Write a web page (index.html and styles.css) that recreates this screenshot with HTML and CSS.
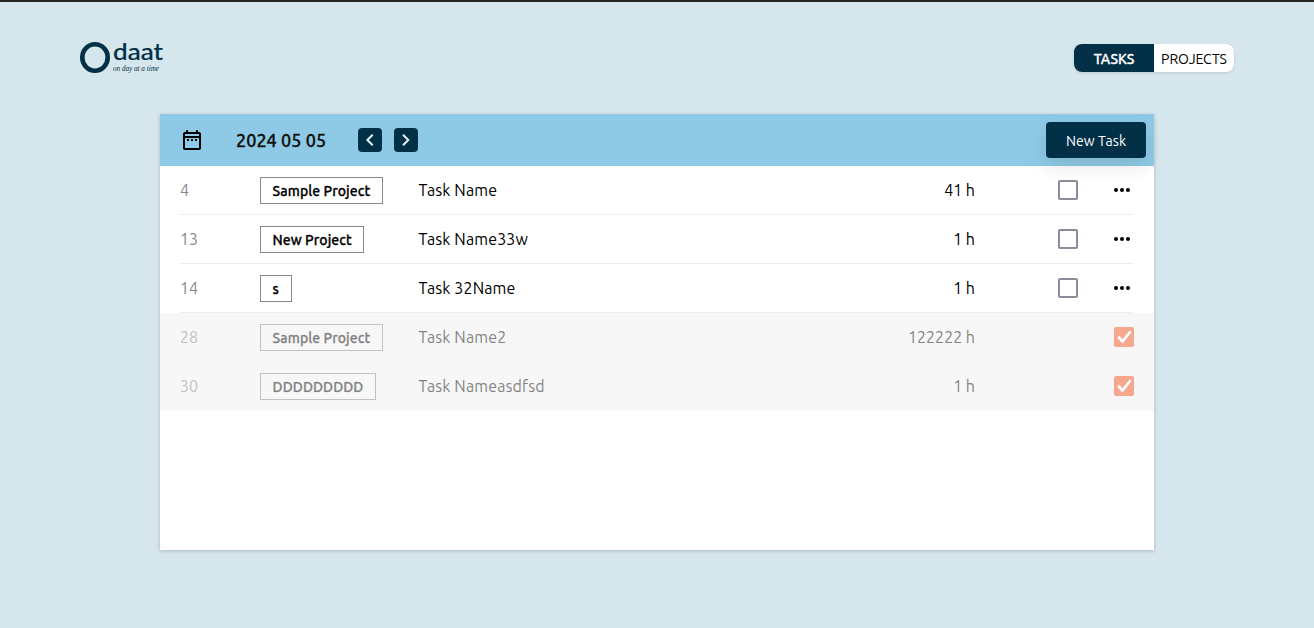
FILE: index.html
```html
<!DOCTYPE html>
<html lang="en">
<head>
<meta charset="utf-8">
<title>Odaat</title>
<link rel="stylesheet" href="styles.css">
</head>
<body>
<header class="header">
  <svg class="logo" width="86" height="36" viewBox="0 0 86 36" role="img" aria-label="Odaat">
    <ellipse class="logo-ring" cx="15" cy="17.5" rx="12.7" ry="13.2"/>
    <text class="logo-name" x="33" y="20" textLength="50" lengthAdjust="spacingAndGlyphs">daat</text>
    <text class="logo-tag" x="33" y="30.5" textLength="46" lengthAdjust="spacingAndGlyphs">on day at a time</text>
  </svg>
  <nav class="tabs">
    <a class="tab tab-active">TASKS</a>
    <a class="tab">PROJECTS</a>
  </nav>
</header>
<main class="card">
  <div class="toolbar">
    <svg class="calendar" width="24" height="24" viewBox="0 0 24 24"><path d="M7 11h2v2H7zm4 0h2v2h-2zm4 0h2v2h-2zM19 4h-1V2h-2v2H8V2H6v2H5c-1.1 0-2 .9-2 2v14c0 1.1.9 2 2 2h14c1.1 0 2-.9 2-2V6c0-1.100-.9-2-2-2zm0 2v2H5V6zM5 20V10h14v10z"/></svg>
    <h1 class="date">2024 05 05</h1>
    <button class="arrow" aria-label="Previous"><svg width="24" height="24" viewBox="0 0 24 24"><path d="m14.700 6.700-5.300 5.300 5.300 5.300"/></svg></button>
    <button class="arrow" aria-label="Next"><svg width="24" height="24" viewBox="0 0 24 24"><path d="m9 6.700 5.300 5.300L9 17.300"/></svg></button>
    <button class="new-task">New Task</button>
  </div>
  <div class="row">
    <span class="id">4</span><span class="project"><b class="tag">Sample Project</b></span><span class="name">Task Name</span><span class="hours">41 h</span><span class="box"></span>
    <svg class="more" width="16" height="4" viewBox="0 0 16 4"><circle cx="2" cy="2" r="2"/><circle cx="8" cy="2" r="2"/><circle cx="14" cy="2" r="2"/></svg>
  </div>
  <div class="row">
    <span class="id">13</span><span class="project"><b class="tag">New Project</b></span><span class="name">Task Name33w</span><span class="hours">1 h</span><span class="box"></span>
    <svg class="more" width="16" height="4" viewBox="0 0 16 4"><circle cx="2" cy="2" r="2"/><circle cx="8" cy="2" r="2"/><circle cx="14" cy="2" r="2"/></svg>
  </div>
  <div class="row">
    <span class="id">14</span><span class="project"><b class="tag">s</b></span><span class="name">Task 32Name</span><span class="hours">1 h</span><span class="box"></span>
    <svg class="more" width="16" height="4" viewBox="0 0 16 4"><circle cx="2" cy="2" r="2"/><circle cx="8" cy="2" r="2"/><circle cx="14" cy="2" r="2"/></svg>
  </div>
  <div class="row done">
    <span class="id">28</span><span class="project"><b class="tag">Sample Project</b></span><span class="name">Task Name2</span><span class="hours">122222 h</span>
    <svg class="check" width="20" height="20" viewBox="0 0 20 20"><rect width="20" height="20" rx="2"/><path d="m5 10.500 3.500 4L16 5"/></svg>
  </div>
  <div class="row done">
    <span class="id">30</span><span class="project"><b class="tag">DDDDDDDDD</b></span><span class="name">Task Nameasdfsd</span><span class="hours">1 h</span>
    <svg class="check" width="20" height="20" viewBox="0 0 20 20"><rect width="20" height="20" rx="2"/><path d="m5 10.500 3.500 4L16 5"/></svg>
  </div>
</main>
</body>
</html>
```
FILE: styles.css
```css
* { box-sizing: border-box; }
body {
  margin: 0;
  height: 628px;
  overflow: hidden;
  border-top: 2px solid #242424;
  background: #d5e6ec;
  color: #000;
  font-family: Ubuntu, "Noto Sans", sans-serif;
  font-size: 16px;
}
.header {
  display: flex;
  justify-content: space-between;
  align-items: center;
  height: 112px;
  padding: 0 80px;
}
.logo { display: block; overflow: visible; }
.logo-ring { fill: none; stroke: #023047; stroke-width: 4.6; }
.logo-name { fill: #023047; font: 500 23px Lato, sans-serif; stroke: #023047; stroke-width: .2px; }
.logo-tag { fill: #023047; font: italic 8px "Liberation Serif", serif; }
.tabs {
  display: flex;
  width: 160px;
  height: 28px;
  overflow: hidden;
  border-radius: 8px;
  background: #fff;
  box-shadow: 0 1px 3px rgba(0, 0, 0, .12);
}
.tab {
  width: 80px;
  line-height: 30px;
  text-align: center;
  font-size: 14px;
  letter-spacing: -.05px;
}
.tab-active { background: #023047; color: #fff; font-weight: 500; -webkit-text-stroke: .3px; }
.card {
  width: 994px;
  height: 436px;
  margin: 0 auto;
  background: #fff;
  box-shadow: 0 1px 4px rgba(0, 0, 0, .2);
}
.toolbar {
  display: flex;
  align-items: center;
  height: 52px;
  padding: 0 8px 0 20px;
  background: #8ecae6;
}
.calendar { margin-right: 32px; }
.date {
  width: 122px;
  margin: 0;
  font-size: 18px;
  line-height: 26px;
  font-weight: 500;
  -webkit-text-stroke: .3px;
  letter-spacing: .05px;
  white-space: nowrap;
  color: #111;
}
.arrow {
  width: 24px;
  height: 24px;
  padding: 0;
  margin-right: 12px;
  border: 0;
  border-radius: 4px;
  background: #023047;
}
.arrow svg { display: block; fill: none; stroke: #e3eef2; stroke-width: 2; }
.new-task {
  width: 100px;
  height: 36px;
  margin-left: auto;
  padding: 1px 0 0;
  border: 0;
  border-radius: 4px;
  background: #023047;
  box-shadow: 0 8px 20px rgba(0, 0, 0, .1);
  color: #fff;
  font: 14px Ubuntu, "Noto Sans", sans-serif;
  letter-spacing: .1px;
}
.row {
  display: grid;
  grid-template-columns: 80px 158px 417px 140px 83px 56px 20px;
  align-items: center;
  height: 49px;
  margin: 0 20px;
  border-bottom: 1px solid #eee;
  line-height: 24px;
}
.id { color: #888; }
.tag {
  display: block;
  width: fit-content;
  height: 27px;
  padding: 0 11.6px;
  border: 1px solid #888;
  line-height: 26px;
  font-size: 14px;
  font-weight: 500;
  letter-spacing: .07px;
  -webkit-text-stroke: .3px;
}
.name { padding-left: .5px; letter-spacing: .13px; }
.hours { text-align: right; }
.box {
  margin-left: 83px;
  width: 20px;
  height: 20px;
  border: 2px solid #8d8a9b;
  border-radius: 2px;
}
.more { grid-column: 6 / 8; justify-self: end; margin-right: 4px; }
.done {
  margin: 0;
  padding: 0 20px;
  border-color: #f7f7f7;
  background: #f7f7f7;
}
.done > * { opacity: .48; }
.done .check { grid-column: 7; opacity: 1; }
.check rect { fill: #f5a88d; }
.check path { fill: none; stroke: #fff; stroke-width: 2.8; stroke-linecap: round; stroke-linejoin: round; }
```
